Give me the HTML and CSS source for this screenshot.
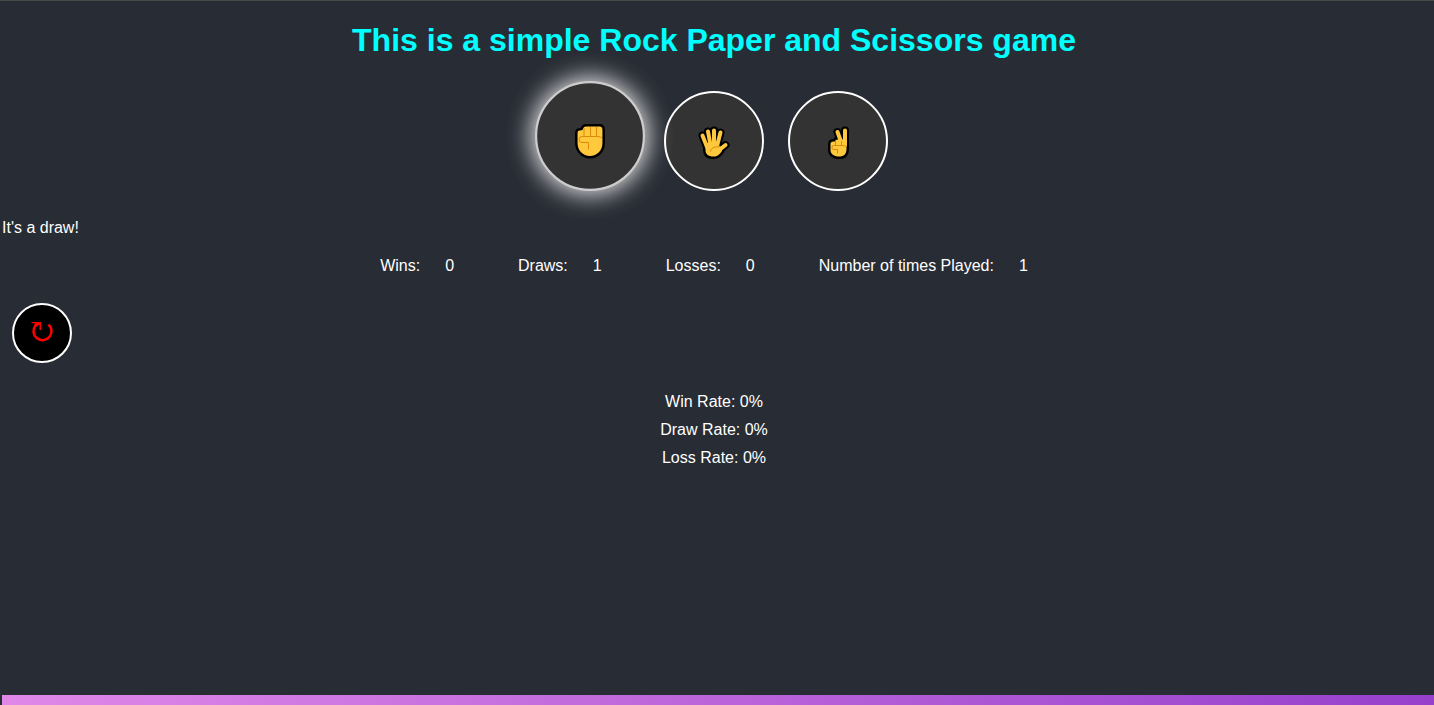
FILE: index.html
```html
<!DOCTYPE html>
<html lang="en">
<head>
<meta charset="utf-8">
<meta name="viewport" content="width=device-width, initial-scale=1">
<title>Rock Paper Scissors</title>
<link rel="stylesheet" href="styles.css">
</head>
<body>
<main class="game">
  <h1 class="title">This is a simple Rock Paper and Scissors game</h1>
  <div class="choices">
    <button class="choice choice-active" type="button" aria-label="Rock">
      <svg viewBox="-28 -32 106 106" aria-hidden="true">
        <path class="outline" d="M12.5 18Q12.5 15.500 15 15.500L17.500 15Q18.500 11.500 21 11.500H34.500Q37.500 11.500 37.500 15V28C37.500 35.500 32 41 25 41S12.500 35.500 12.500 28Z"/>
        <path class="skin" d="M12.5 18Q12.5 15.500 15 15.500L17.500 15Q18.500 11.500 21 11.500H34.500Q37.500 11.500 37.500 15V28C37.500 35.500 32 41 25 41S12.500 35.500 12.500 28Z"/>
        <path class="crease" d="M19 13V21.500M25.500 12V21.500M31.500 12V21.500M37 23Q36 21.500 32 21.500H17Q14 21.500 14 24.500T17 27.500H23.500V34.500"/>
      </svg>
    </button>
    <button class="choice" type="button" aria-label="Paper">
      <svg viewBox="-24 -25 96 96" aria-hidden="true">
        <g class="outline"><path class="finger" d="M12.500 17.500L17 29M18 13.500L20.500 27M24 12.500V27M30.500 14.500L27 28M35.500 27L28 33"/><path d="M15.500 25L28.500 24.500L29.500 29L32 28L32 33C29 37 27.500 38.500 23.500 38.500C18 38.500 15.500 36 15.500 32Z"/></g>
        <g class="skin"><path class="finger" d="M12.500 17.500L17 29M18 13.500L20.500 27M24 12.500V27M30.500 14.500L27 28M35.500 27L28 33"/><path d="M15.500 25L28.500 24.500L29.500 29L32 28L32 33C29 37 27.500 38.500 23.500 38.500C18 38.500 15.500 36 15.500 32Z"/></g>
        <path class="crease" d="M20.500 33.500Q21.500 29 26.500 29L30 28.500"/>
      </svg>
    </button>
    <button class="choice" type="button" aria-label="Scissors">
      <svg viewBox="-25 -25 96 96" aria-hidden="true">
        <g class="outline"><path class="finger" d="M22.500 14L26.500 25M30 12.500V27"/><path d="M15.500 26Q15.500 23.500 18.500 23.500H20V23Q20.500 21.500 22.500 21.500H31.500V31C31.500 36 29 38.500 24 38.500S15.500 36 15.500 32Z"/></g>
        <g class="skin"><path class="finger" d="M22.500 14L26.500 25M30 12.500V27"/><path d="M15.500 26Q15.500 23.500 18.500 23.500H20V23Q20.500 21.500 22.500 21.500H31.500V31C31.500 36 29 38.500 24 38.500S15.500 36 15.500 32Z"/></g>
        <path class="crease" d="M20.500 23V27.500M26.500 23V27.500M31.500 28.500Q30 27.500 27 27.500H18.500Q17 27.500 17 29.500T18.500 31.500H22.500V35.500"/>
      </svg>
    </button>
  </div>
  <p class="result">It's a draw!</p>
  <dl class="stats">
    <div class="stat"><dt>Wins:</dt><dd>0</dd></div>
    <div class="stat"><dt>Draws:</dt><dd>1</dd></div>
    <div class="stat"><dt>Losses:</dt><dd>0</dd></div>
    <div class="stat"><dt>Number of times Played:</dt><dd>1</dd></div>
  </dl>
  <button class="reset" type="button" aria-label="Reset">
    <svg viewBox="0 0 56 56" aria-hidden="true"><path class="reset-arc" d="M21.500 20.500A9 9 0 1 0 34.500 19.500"/><path class="reset-head" d="M17.500 17H27V25H25.500V19.500L22 22L20 20L21.500 18.500L17.500 18Z"/></svg>
  </button>
  <div class="rates">
    <p>Win Rate: 0%</p>
    <p>Draw Rate: 0%</p>
    <p>Loss Rate: 0%</p>
  </div>
</main>
<footer class="bar"></footer>
</body>
</html>
```
FILE: styles.css
```css
* {
  box-sizing: border-box;
}

body {
  display: flex;
  flex-direction: column;
  min-height: 100vh;
  margin: 0;
  padding-left: 2px;
  border-top: 1px solid #484a48;
  background: #282c34;
  color: #fff;
  font: 16px/20px "Liberation Sans", Arial, sans-serif;
}

.game {
  padding: 20px 8px 0 0;
}

.title {
  margin: 0 0 32px;
  color: #0ff;
  font-size: 32px;
  line-height: 38px;
  text-align: center;
}

.choices {
  display: flex;
  justify-content: center;
  gap: 24px;
}

.choice {
  width: 100px;
  height: 100px;
  padding: 0;
  border: 2px solid #fff;
  border-radius: 50%;
  background: #333;
}

.choice svg,
.reset svg {
  display: block;
  width: 100%;
  height: 100%;
}

.choice-active {
  border-color: #ccc;
  box-shadow: 0 0 22px 3px rgba(255, 255, 255, 0.9);
  transform: translateY(-5px) scale(1.1);
}

.outline {
  fill: #000;
  stroke: #000;
  stroke-width: 5px;
  stroke-linejoin: round;
}

.skin {
  fill: #ffc83d;
}

.finger {
  fill: none;
  stroke-linecap: round;
}

.outline .finger {
  stroke-width: 8px;
}

.skin .finger {
  stroke: #ffc83d;
  stroke-width: 4px;
}

.crease {
  fill: none;
  stroke: #d98b0a;
  stroke-width: 1px;
}

.result {
  margin: 27px 0 18px;
}

.stats {
  display: flex;
  justify-content: center;
  gap: 64px;
  margin: 0 0 27px;
  padding-right: 20px;
}

.stat {
  display: flex;
  gap: 25px;
}

.stat dd {
  margin: 0;
}

.reset {
  display: block;
  width: 60px;
  height: 60px;
  margin: 0 0 25px 10px;
  padding: 0;
  border: 2px solid #fff;
  border-radius: 50%;
  background: #000;
}

.reset-arc {
  fill: none;
  stroke: #f00;
  stroke-width: 2.5px;
}

.reset-head {
  fill: #f00;
}

.rates {
  line-height: 28px;
  text-align: center;
}

.rates p {
  margin: 0;
}

.bar {
  height: 10px;
  margin-top: auto;
  background: linear-gradient(to right, #e088e8, #9640cc);
}
```
